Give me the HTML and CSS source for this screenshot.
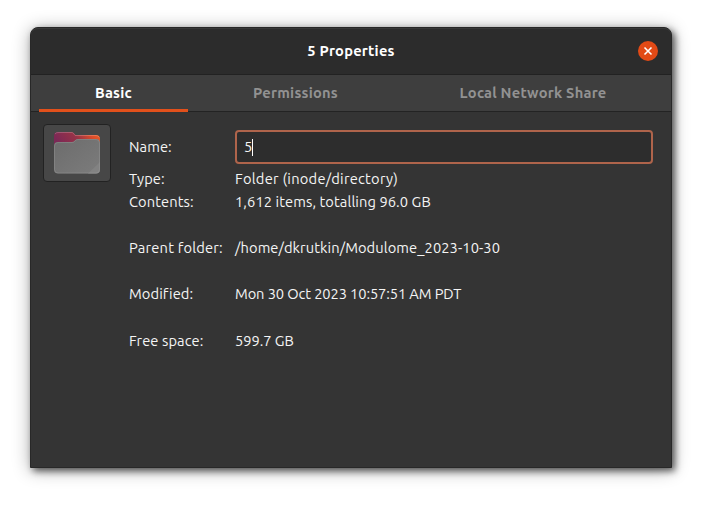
FILE: index.html
```
<!DOCTYPE html>
<html lang="en">
<head>
<meta charset="utf-8">
<title>5 Properties</title>
<link rel="stylesheet" href="styles.css">
</head>
<body>
<main class="window">
  <header class="titlebar">
    <h1 class="title">5 Properties</h1>
    <button class="close" aria-label="Close">
      <svg viewBox="0 0 20 20" width="20" height="20"><path d="M6.500 6.500l7 7M13.500 6.500l-7 7" stroke="#fff" stroke-width="1.600" fill="none"/></svg>
    </button>
  </header>
  <nav class="tabs">
    <a class="tab active"><span>Basic</span></a>
    <a class="tab"><span>Permissions</span></a>
    <a class="tab"><span>Local Network Share</span></a>
  </nav>
  <section class="content">
    <button class="icon-button" aria-label="Folder icon">
      <svg width="48" height="44" viewBox="0 0 48 44">
        <defs>
          <linearGradient id="back" x1="0" y1="0.3" x2="1" y2="0"><stop offset="0" stop-color="#7b2856"/><stop offset=".45" stop-color="#983347"/><stop offset=".75" stop-color="#d94b2b"/><stop offset="1" stop-color="#ee6023"/></linearGradient>
          <linearGradient id="front" x1="0" y1="0" x2="1" y2="1"><stop offset="0" stop-color="#6c6c6c"/><stop offset="1" stop-color="#7c7c7c"/></linearGradient>
        </defs>
        <path d="M1 18V5Q1 1 5 1H18.500Q20 1 20.800 2.100L22.500 4H43Q47 4 47 8V18Z" fill="url(#back)"/>
        <path d="M2 3Q3 1.500 5 1.500H18.500Q19.700 1.500 20.500 2.500L22.200 4.500H43Q45.500 4.500 46.400 6.500" fill="none" stroke="#fff" stroke-opacity=".2"/>
        <path d="M1 15Q1 11 5 11H19Q20.500 11 21.500 9.800L22.700 8.700Q23.400 8 24.700 8H43Q47 8 47 12V38.500Q47 42.500 43 42.500H5Q1 42.500 1 38.500Z" fill="url(#front)"/>
        <path d="M47 31V38.500Q47 42.500 43 42.500H35Z" fill="#828282"/>
        <path d="M1.500 15Q1.500 11.500 5 11.500H19Q20.700 11.500 21.800 10.200L23 9Q23.600 8.500 24.700 8.500H43Q46.500 8.500 46.500 12V38.500Q46.500 42 43 42H5Q1.500 42 1.500 38.500Z" fill="none" stroke="#a0a0a0" stroke-opacity=".35"/>
      </svg>
    </button>
    <dl class="details">
      <dt class="row-name">Name:</dt>
      <dd class="row-name entry"><span>5</span><i class="caret"></i></dd>
      <dt>Type:</dt><dd class="type">Folder (inode/directory)</dd>
      <dt>Contents:</dt><dd>1,612 items, totalling 96.0 GB</dd>
      <dt class="parent">Parent folder:</dt><dd>/home/dkrutkin/Modulome_2023-10-30</dd>
      <dt>Modified:</dt><dd class="date">Mon 30 Oct 2023 10:57:51 AM PDT</dd>
      <dt>Free space:</dt><dd class="free">599.7 GB</dd>
    </dl>
  </section>
</main>
</body>
</html>
```
FILE: styles.css
```
* { box-sizing: border-box; }
body {
  margin: 0;
  padding: 27px 34px 37px 30px;
  height: 505px;
  overflow: hidden;
  background: #fff;
  color: #f5f5f5;
  font: 14.667px/23px "Ubuntu", "Noto Sans", sans-serif;
}
.window {
  width: 642px;
  height: 441px;
  background: #343434;
  border: 1px solid #282828;
  border-radius: 8px 8px 0 0;
  box-shadow: 0 2px 18px rgba(0,0,0,.32), 3px 3px 7px rgba(0,0,0,.6);
}
.titlebar {
  display: grid;
  grid-template-columns: 46px 1fr 46px;
  align-items: center;
  justify-items: center;
  height: 47px;
  padding-bottom: 1px;
  background: #2c2c2c;
  border-top: 1px solid #383838;
  border-bottom: 1px solid #222;
  border-radius: 7px 7px 0 0;
}
.title {
  grid-column: 2;
  margin: 0;
  font-size: 14.667px;
  line-height: 20px;
  font-weight: 700;
  letter-spacing: .23px;
  color: #fff;
}
.close {
  width: 20px;
  height: 20px;
  padding: 0;
  border: 0;
  border-radius: 50%;
  background: #e24a16;
}
.close svg, .icon-button svg { display: block; }
.tabs {
  display: grid;
  grid-template-columns: 149px 197px 260px;
  gap: 9px;
  height: 37px;
  padding-left: 8px;
  background: #3e3e3e;
  box-shadow: inset 0 -1px #232323;
}
.tab {
  display: flex;
  justify-content: center;
  height: 37px;
  line-height: 36px;
  font-weight: 700;
  letter-spacing: .23px;
  color: #929292;
}
.tab.active {
  color: #fff;
  box-shadow: inset 0 -3px #e2501b;
}
.content {
  display: grid;
  grid-template-columns: 68px 524px;
  column-gap: 18px;
  padding: 12px 0 0 12px;
}
.icon-button {
  display: flex;
  width: 68px;
  height: 58px;
  padding: 6px 9px;
  background: #474747;
  border: 1px solid #222;
  border-radius: 4px;
}
.details {
  display: grid;
  grid-template-columns: 106px 418px;
  grid-template-rows: 37px 23px 46px 46px 47px 46px;
  align-items: start;
  margin: 6px 0 0;
}
.details dt, .details dd {
  margin: 0;
  white-space: nowrap;
  font-variant-ligatures: none;
  letter-spacing: .09px;
}
.details .parent { letter-spacing: .2px; }
.details .type { letter-spacing: .25px; }
.details .date { letter-spacing: -.1px; }
.details .free { letter-spacing: -.05px; }
.row-name { height: 34px; line-height: 34px; }
.entry {
  display: flex;
  align-items: center;
  padding-left: 7px;
  background: #2d2d2d;
  border: 2px solid #af644b;
  border-radius: 4px;
}
.caret { width: 1px; height: 17px; background: #fff; }
```
